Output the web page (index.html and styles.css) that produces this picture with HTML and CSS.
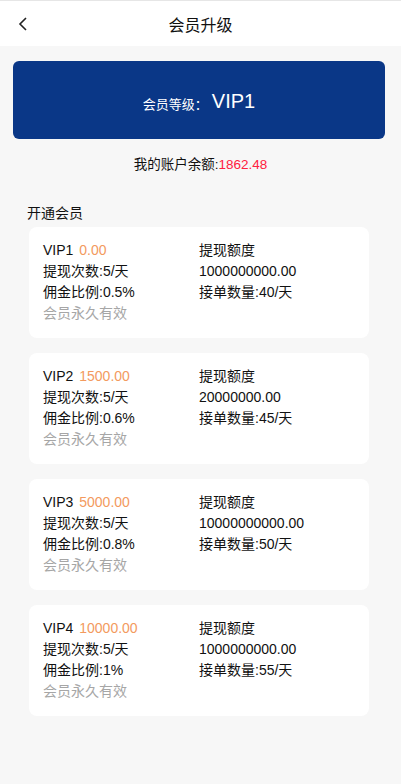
FILE: index.html
```html
<!DOCTYPE html>
<html lang="zh">
<head>
<meta charset="utf-8">
<title>会员升级</title>
<link rel="stylesheet" href="styles.css">
</head>
<body>
<header class="topbar">
  <span class="back"><svg width="12" height="16" viewBox="0 0 12 16"><path d="M9 2 L3 8 L9 14" fill="none" stroke="#222" stroke-width="1.6"/></svg></span>
  <h1 class="title">会员升级</h1>
</header>
<section class="banner"><span class="lvl-label">会员等级：</span><span class="lvl-val">VIP1</span></section>
<p class="balance">我的账户余额:<span class="red">1862.48</span></p>
<h2 class="section-title">开通会员</h2>
<div class="cards">
  <div class="card">
    <div class="cell">VIP1 <span class="price">0.00</span></div><div class="cell">提现额度</div>
    <div class="cell">提现次数:5/天</div><div class="cell">1000000000.00</div>
    <div class="cell">佣金比例:0.5%</div><div class="cell">接单数量:40/天</div>
    <div class="cell gray">会员永久有效</div>
  </div>
  <div class="card">
    <div class="cell">VIP2 <span class="price">1500.00</span></div><div class="cell">提现额度</div>
    <div class="cell">提现次数:5/天</div><div class="cell">20000000.00</div>
    <div class="cell">佣金比例:0.6%</div><div class="cell">接单数量:45/天</div>
    <div class="cell gray">会员永久有效</div>
  </div>
  <div class="card">
    <div class="cell">VIP3 <span class="price">5000.00</span></div><div class="cell">提现额度</div>
    <div class="cell">提现次数:5/天</div><div class="cell">10000000000.00</div>
    <div class="cell">佣金比例:0.8%</div><div class="cell">接单数量:50/天</div>
    <div class="cell gray">会员永久有效</div>
  </div>
  <div class="card">
    <div class="cell">VIP4 <span class="price">10000.00</span></div><div class="cell">提现额度</div>
    <div class="cell">提现次数:5/天</div><div class="cell">1000000000.00</div>
    <div class="cell">佣金比例:1%</div><div class="cell">接单数量:55/天</div>
    <div class="cell gray">会员永久有效</div>
  </div>
</div>
</body>
</html>
```
FILE: styles.css
```css
html, body {
  margin: 0;
  padding: 0;
  background: #f7f7f7;
  font-family: "Liberation Sans", "Noto Sans CJK SC", sans-serif;
  color: #111;
  font-size: 14px;
}
.topbar {
  position: relative;
  height: 45px;
  background: #fff;
  border-top: 1px solid #e6e6e6;
  display: flex;
  align-items: center;
  justify-content: center;
}
.back {
  position: absolute;
  left: 17px;
  top: 15px;
  width: 12px;
  height: 16px;
  display: flex;
}
.title {
  margin: 0;
  font-size: 16px;
  font-weight: normal;
  color: #111;
}
.banner {
  margin: 15px 16px 0 13px;
  height: 78px;
  border-radius: 6px;
  background: #0a3787;
  color: #fff;
  display: flex;
  align-items: center;
  justify-content: center;
  padding-top: 2px;
  box-sizing: border-box;
}
.lvl-label {
  font-size: 13px;
  margin-top: 5px;
}
.lvl-val {
  font-size: 20px;
  margin-left: 4px;
}
.balance {
  margin: 19px 0 0;
  text-align: center;
  line-height: 14px;
  font-size: 13.5px;
}
.red {
  color: #ff2040;
}
.section-title {
  margin: 33px 0 0 27px;
  font-size: 14px;
  font-weight: normal;
  line-height: 16px;
}
.cards {
  margin: 6px 32px 0 29px;
  display: flex;
  flex-direction: column;
  gap: 15px;
}
.card {
  background: #fff;
  border-radius: 8px;
  padding: 13px 14px 14px;
  display: grid;
  grid-template-columns: 1fr 1fr;
  grid-auto-rows: 21px;
  align-items: center;
}
.cell {
  font-size: 14px;
  line-height: 21px;
  white-space: nowrap;
}
.price {
  color: #f39a5e;
  margin-left: 2px;
}
.gray {
  color: #a6a6a6;
}
```
